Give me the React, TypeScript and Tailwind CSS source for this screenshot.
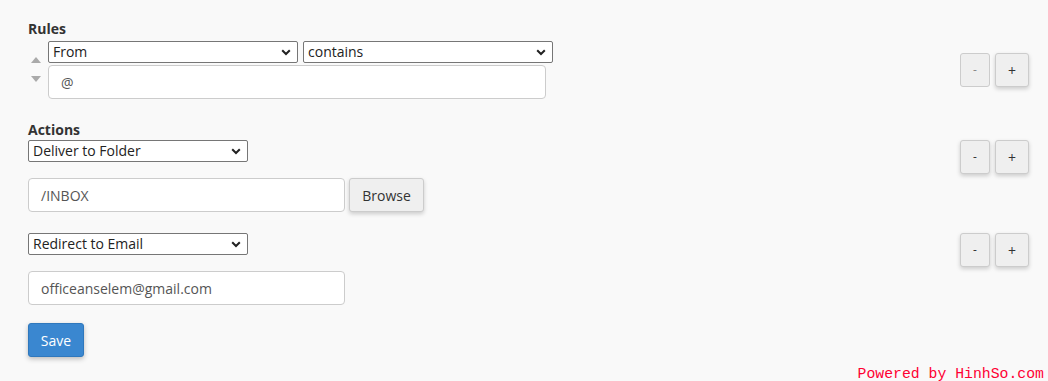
import React from "react";

const font = { fontFamily: '"Open Sans", "Liberation Sans", sans-serif' };

function Chevron() {
  return (
    <svg width="10" height="7" viewBox="0 0 10 7" className="shrink-0">
      <path d="M1.2 1.2 L5 5 L8.8 1.2" fill="none" stroke="#222" strokeWidth="2" />
    </svg>
  );
}

function FakeSelect({ value, w }: { value: string; w: string }) {
  return (
    <div
      className={`${w} h-[22px] flex items-center justify-between border border-[#767676] bg-white pl-[4px] pr-[6px] text-[14px] text-[#222] rounded-[2px]`}
    >
      <span className="leading-none">{value}</span>
      <Chevron />
    </div>
  );
}

function TextBox({ value, w }: { value: string; w: string }) {
  return (
    <div
      className={`${w} h-[34px] flex items-center border border-[#ccc] bg-white rounded-[4px] pl-[12px] text-[14px] text-[#555]`}
    >
      {value}
    </div>
  );
}

function PlusMinus({ disabledMinus }: { disabledMinus?: boolean }) {
  return (
    <div className="flex gap-[5px]">
      <button
        className={`w-[30px] h-[34px] flex items-center justify-center rounded-[3px] border border-[#ccc] bg-[#efefef] text-[12px] ${
          disabledMinus ? "text-[#888]" : "text-[#333] shadow-[0_2px_4px_rgba(0,0,0,0.18)]"
        }`}
      >
        -
      </button>
      <button className="w-[34px] h-[34px] flex items-center justify-center rounded-[3px] border border-[#ccc] bg-[#efefef] text-[14px] text-[#333] shadow-[0_2px_4px_rgba(0,0,0,0.18)]">
        +
      </button>
    </div>
  );
}

export default function App() {
  return (
    <div className="relative w-[1048px] h-[381px] bg-[#f9f9f9] text-[#333] overflow-hidden" style={font}>
      <div className="pl-[28px] pr-[19px] pt-[19px] flex flex-col">
        {/* Rules */}
        <h3 className="text-[14px] font-bold leading-[20px]">Rules</h3>
        <div className="flex items-center justify-between mt-[2px]">
          <div className="flex">
            <div className="w-[20px] flex flex-col items-start pt-[16px] pl-[3px] gap-[13px]">
              <svg width="10" height="6" viewBox="0 0 10 6"><path d="M0 6 L5 0 L10 6 Z" fill="#aaa" /></svg>
              <svg width="10" height="6" viewBox="0 0 10 6"><path d="M0 0 L5 6 L10 0 Z" fill="#aaa" /></svg>
            </div>
            <div className="flex flex-col gap-[2px]">
              <div className="flex gap-[5px]">
                <FakeSelect value="From" w="w-[250px]" />
                <FakeSelect value="contains" w="w-[250px]" />
              </div>
              <TextBox value="@" w="w-[498px]" />
            </div>
          </div>
          <PlusMinus disabledMinus />
        </div>

        {/* Actions */}
        <h3 className="text-[14px] font-bold leading-[20px] mt-[21px]">Actions</h3>
        <div className="flex items-start justify-between">
          <div className="flex flex-col">
            <FakeSelect value="Deliver to Folder" w="w-[220px]" />
            <div className="flex gap-[4px] mt-[16px]">
              <TextBox value="/INBOX" w="w-[317px]" />
              <button className="w-[75px] h-[34px] flex items-center justify-center rounded-[3px] border border-[#ccc] bg-[#efefef] text-[14px] text-[#333] shadow-[0_2px_4px_rgba(0,0,0,0.18)]">
                Browse
              </button>
            </div>
          </div>
          <PlusMinus />
        </div>

        <div className="flex items-start justify-between mt-[21px]">
          <div className="flex flex-col">
            <FakeSelect value="Redirect to Email" w="w-[220px]" />
            <div className="mt-[16px]">
              <TextBox value="officeanselem@gmail.com" w="w-[317px]" />
            </div>
          </div>
          <PlusMinus />
        </div>

        <div className="mt-[18px]">
          <button className="w-[56px] h-[34px] rounded-[3px] border border-[#2f78bd] bg-[#3a87d0] text-white text-[14px] shadow-[0_2px_5px_rgba(0,0,0,0.25)]">
            Save
          </button>
        </div>
      </div>

      <div
        className="absolute right-[4px] bottom-[-1px] text-[14.8px] leading-[16px] text-[#ff0033]"
        style={{ fontFamily: '"Liberation Mono", monospace' }}
      >
        Powered by HinhSo.com
      </div>
    </div>
  );
}
